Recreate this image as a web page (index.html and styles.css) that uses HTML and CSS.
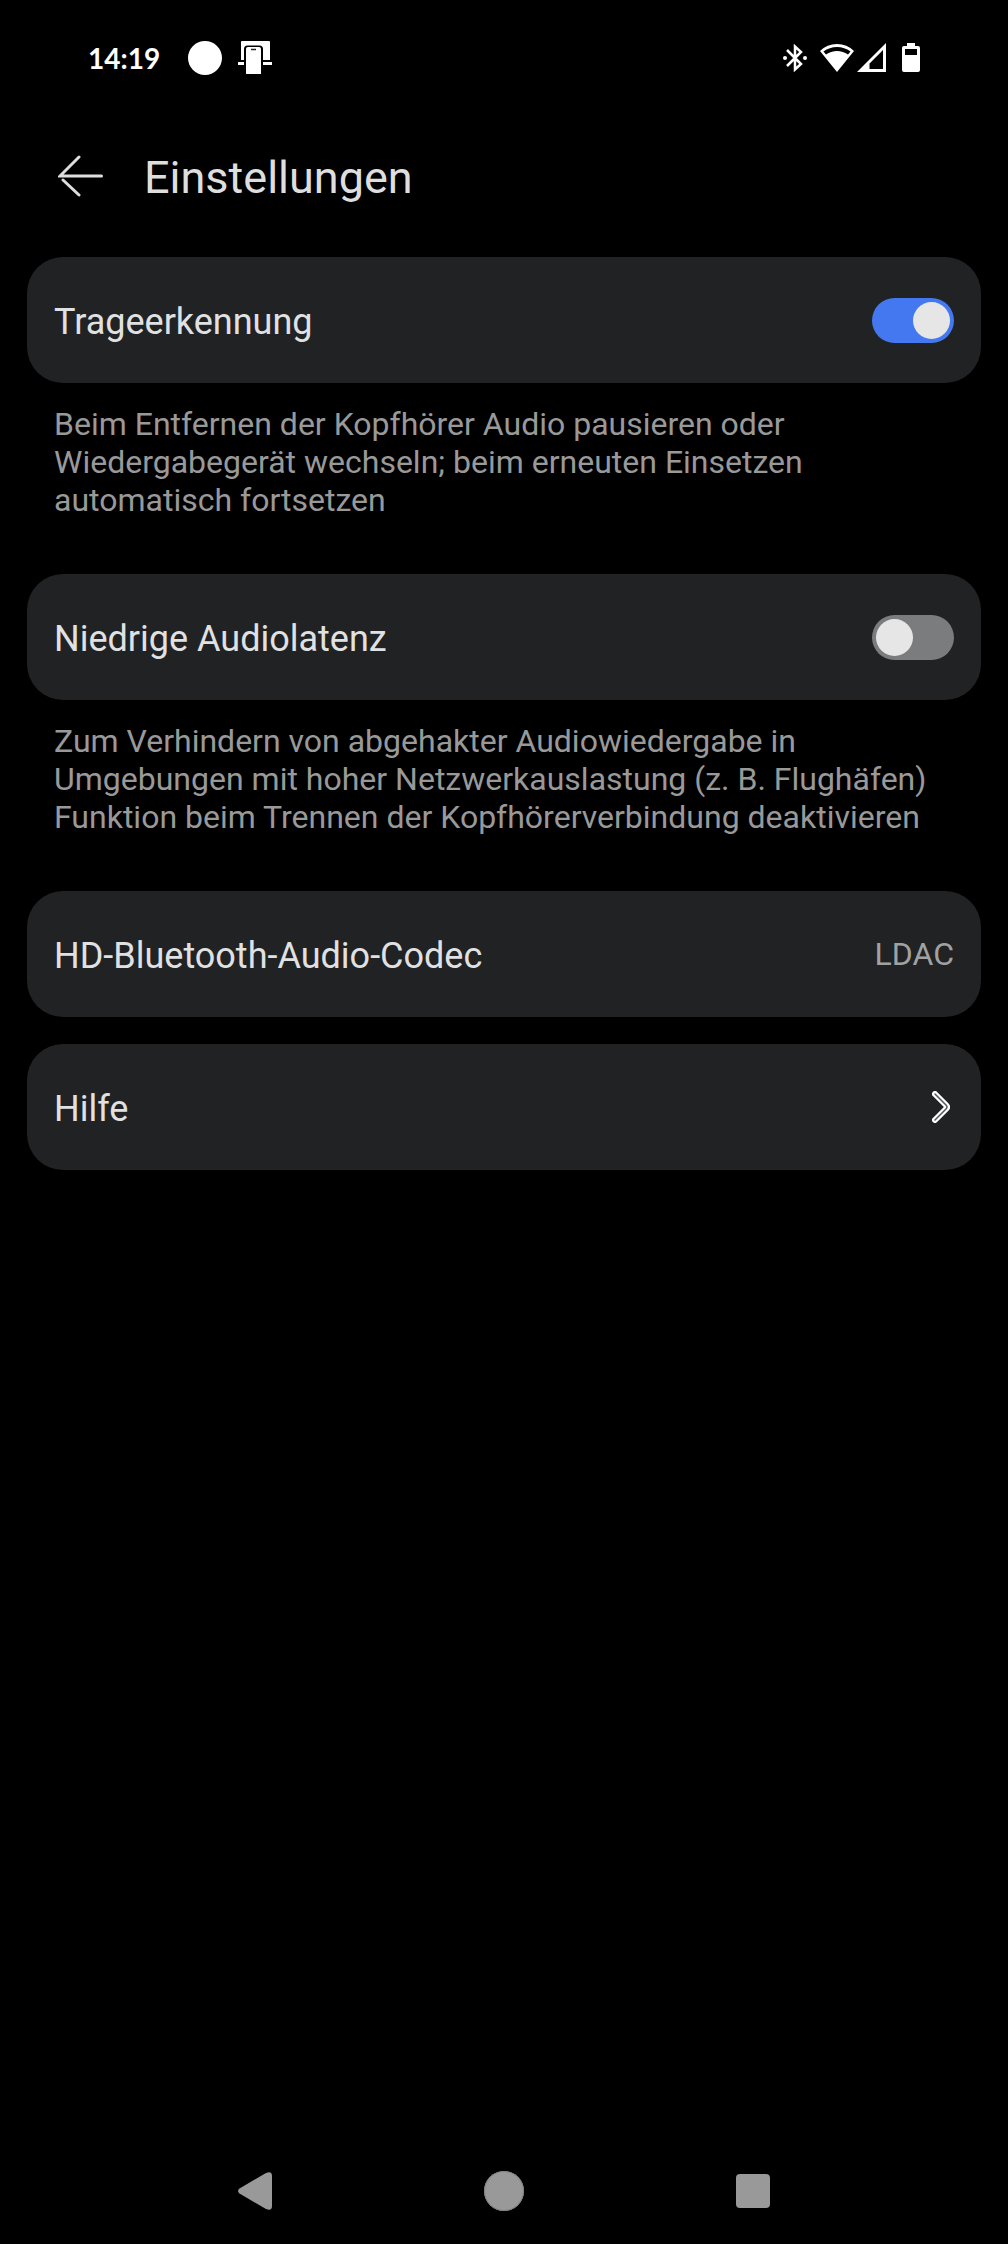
FILE: index.html
```html
<!DOCTYPE html>
<html lang="de">
<head>
<meta charset="utf-8">
<meta name="viewport" content="width=device-width, initial-scale=1">
<title>Einstellungen</title>
<link rel="stylesheet" href="styles.css">
</head>
<body>
<div class="screen">
  <div class="statusbar">
    <div class="status-left">
      <span class="clock">14:19</span>
      <span class="dot"></span>
      <svg class="cast" width="34" height="33" viewBox="0 0 34 33" aria-hidden="true">
        <path fill="#fff" d="M4 0h27q1 0 1 1v18h-7V8q0-3.500-3.500-3.500h-12Q6 4.500 6 8v11H3V1q0-1 1-1zM0 21h6v3H0zM25 21h9v3h-9z"/>
        <path fill="#fff" d="M8 8q0-2 2-2h11q2 0 2 2v25H8z"/>
        <path stroke="#222" stroke-width="1.500" d="M13 8.500h5"/>
      </svg>
    </div>
    <div class="status-right">
      <svg class="bluetooth" width="24" height="28" viewBox="0 0 24 28" aria-hidden="true">
        <path fill="none" stroke="#fff" stroke-width="2.500" d="M4 6l14 14-6 5.500V2.500l6 5.500L4 22"/>
        <circle cx="2" cy="14" r="2" fill="#fff"/><circle cx="22" cy="14" r="2" fill="#fff"/>
      </svg>
      <svg class="wifi" width="34" height="28" viewBox="0 0 34 28" aria-hidden="true">
        <path fill="#fff" fill-rule="evenodd" d="M0 7Q7 0 17 0t17 7L17 28zM3.500 7.500L6 10.500Q11 7 17 7t11 3.500l2.500-3Q24.500 3 17 3T3.500 7.500z"/>
      </svg>
      <svg class="signal" width="29" height="29" viewBox="0 0 29 29" aria-hidden="true">
        <path fill="#fff" fill-rule="evenodd" d="M0 29L29 0v29zM26 7L12.500 20.500V26H26z"/>
      </svg>
      <svg class="battery" width="18" height="29" viewBox="0 0 18 29" aria-hidden="true">
        <path fill="#fff" fill-rule="evenodd" d="M5 0h8v3h3q2 0 2 2v22q0 2-2 2H2q-2 0-2-2V5q0-2 2-2h3zM3 6v6h12V6z"/>
      </svg>
    </div>
  </div>

  <header class="header">
    <button class="back" type="button" aria-label="Zurück">
      <svg width="46" height="42" viewBox="0 0 46 42" aria-hidden="true">
        <path fill="none" stroke="#dedede" stroke-width="3" stroke-linecap="round" d="M43.500 21H2L21 2M5 25L21 40"/>
      </svg>
    </button>
    <h1 class="title">Einstellungen</h1>
  </header>

  <main class="settings">
    <section class="group">
      <label class="card">
        <span class="label">Trageerkennung</span>
        <input class="switch" type="checkbox" role="switch" aria-describedby="wear-note" checked>
      </label>
      <p class="note" id="wear-note">Beim Entfernen der Kopfhörer Audio pausieren oder Wiedergabegerät wechseln; beim erneuten Einsetzen automatisch fortsetzen</p>
    </section>
    <section class="group">
      <label class="card">
        <span class="label">Niedrige Audiolatenz</span>
        <input class="switch" type="checkbox" role="switch" aria-describedby="latency-note">
      </label>
      <p class="note" id="latency-note">Zum Verhindern von abgehakter Audiowiedergabe in Umgebungen mit hoher Netzwerkauslastung (z. B. Flughäfen) Funktion beim Trennen der Kopfhörerverbindung deaktivieren</p>
    </section>
    <button class="card" type="button">
      <span class="label">HD-Bluetooth-Audio-Codec</span>
      <span class="value">LDAC</span>
    </button>
    <a class="card" href="#hilfe">
      <span class="label">Hilfe</span>
      <svg class="chevron" width="18" height="32" viewBox="0 0 18 32" aria-hidden="true">
        <path fill="none" stroke="#fff" stroke-width="6" stroke-linecap="round" stroke-linejoin="round" d="M3 3l11 11q2 2 0 4L3 29"/>
        <path fill="none" stroke="#555" stroke-width="1.500" stroke-linecap="round" stroke-linejoin="round" d="M3 3l11 11q2 2 0 4L3 29"/>
      </svg>
    </a>
  </main>

  <nav class="navbar" aria-label="System">
    <button type="button" aria-label="Zurück">
      <svg width="34" height="38" viewBox="0 0 34 38" aria-hidden="true"><path fill="#999" d="M1.500 16.500L28 1q6-2.500 6 3v30q0 5.500-6 3L1.500 21.500q-3-2.500 0-5z"/></svg>
    </button>
    <button type="button" aria-label="Startbildschirm">
      <svg width="42" height="42" viewBox="0 0 42 42" aria-hidden="true"><circle cx="21" cy="21" r="20" fill="#999"/><circle cx="21" cy="21" r="19.500" fill="none" stroke="#808080"/></svg>
    </button>
    <button type="button" aria-label="Letzte Apps">
      <svg width="34" height="34" viewBox="0 0 34 34" aria-hidden="true"><rect width="34" height="34" rx="4" fill="#999"/></svg>
    </button>
  </nav>
</div>
</body>
</html>
```
FILE: styles.css
```css
* {
  box-sizing: border-box;
}

body {
  margin: 0;
  background: #000;
  color: #e0e1e2;
  font-family: Roboto, "Liberation Sans", sans-serif;
}

button {
  margin: 0;
  padding: 0;
  border: 0;
  background: none;
  color: inherit;
  font: inherit;
}

svg {
  display: block;
  flex: none;
}

.screen {
  display: flex;
  flex-direction: column;
  min-height: 100vh;
}

.statusbar {
  display: flex;
  align-items: center;
  justify-content: space-between;
  height: 115px;
  padding: 0 88px;
}

.status-left,
.status-right {
  display: flex;
  align-items: center;
}

.clock {
  margin-right: 28px;
  color: #fff;
  font-family: Lato, Roboto, sans-serif;
  font-size: 28px;
  font-weight: 700;
  line-height: 36px;
}

.dot {
  width: 34px;
  height: 34px;
  border-radius: 50%;
  background: #fff;
}

.cast {
  margin-left: 16px;
}

.wifi {
  margin-left: 13px;
}

.signal {
  margin-left: 3px;
}

.battery {
  margin-left: 16px;
}

.header {
  display: flex;
  align-items: center;
  gap: 40px;
  height: 121px;
  padding: 0 58px;
}

.title {
  margin: 0;
  padding-top: 4px;
  color: #dedede;
  font-size: 45px;
  font-weight: 400;
  line-height: 56px;
}

.settings {
  display: flex;
  flex: 1;
  flex-direction: column;
  gap: 27px;
  padding: 21px 27px;
}

.group {
  display: flex;
  flex-direction: column;
  gap: 22px;
  padding-bottom: 28px;
}

.card {
  display: flex;
  align-items: center;
  justify-content: space-between;
  gap: 24px;
  width: 100%;
  min-height: 126px;
  padding: 24px 27px;
  border-radius: 36px;
  background: #212223;
  color: inherit;
  text-align: left;
  text-decoration: none;
}

.label {
  padding-top: 4px;
  font-size: 36px;
  line-height: 44px;
}

.value {
  color: #a0a1a1;
  font-size: 32px;
  line-height: 38px;
}

.note {
  margin: 0;
  padding: 0 27px;
  color: #999;
  font-size: 32px;
  line-height: 38px;
}

.switch {
  display: flex;
  flex: none;
  align-items: center;
  appearance: none;
  width: 82px;
  height: 45px;
  margin: 0;
  padding: 4px;
  border-radius: 23px;
  background: #7b7c7d;
}

.switch::before {
  width: 37px;
  height: 37px;
  border-radius: 50%;
  background: #e6e6e6;
  content: "";
}

.switch:checked {
  justify-content: flex-end;
  background: #4478f0;
}

.chevron {
  margin-right: 4px;
}

.navbar {
  display: grid;
  grid-template-columns: repeat(3, 1fr);
  height: 106px;
  padding: 0 130px;
}

.navbar button {
  display: flex;
  align-items: center;
  justify-content: center;
}
```
